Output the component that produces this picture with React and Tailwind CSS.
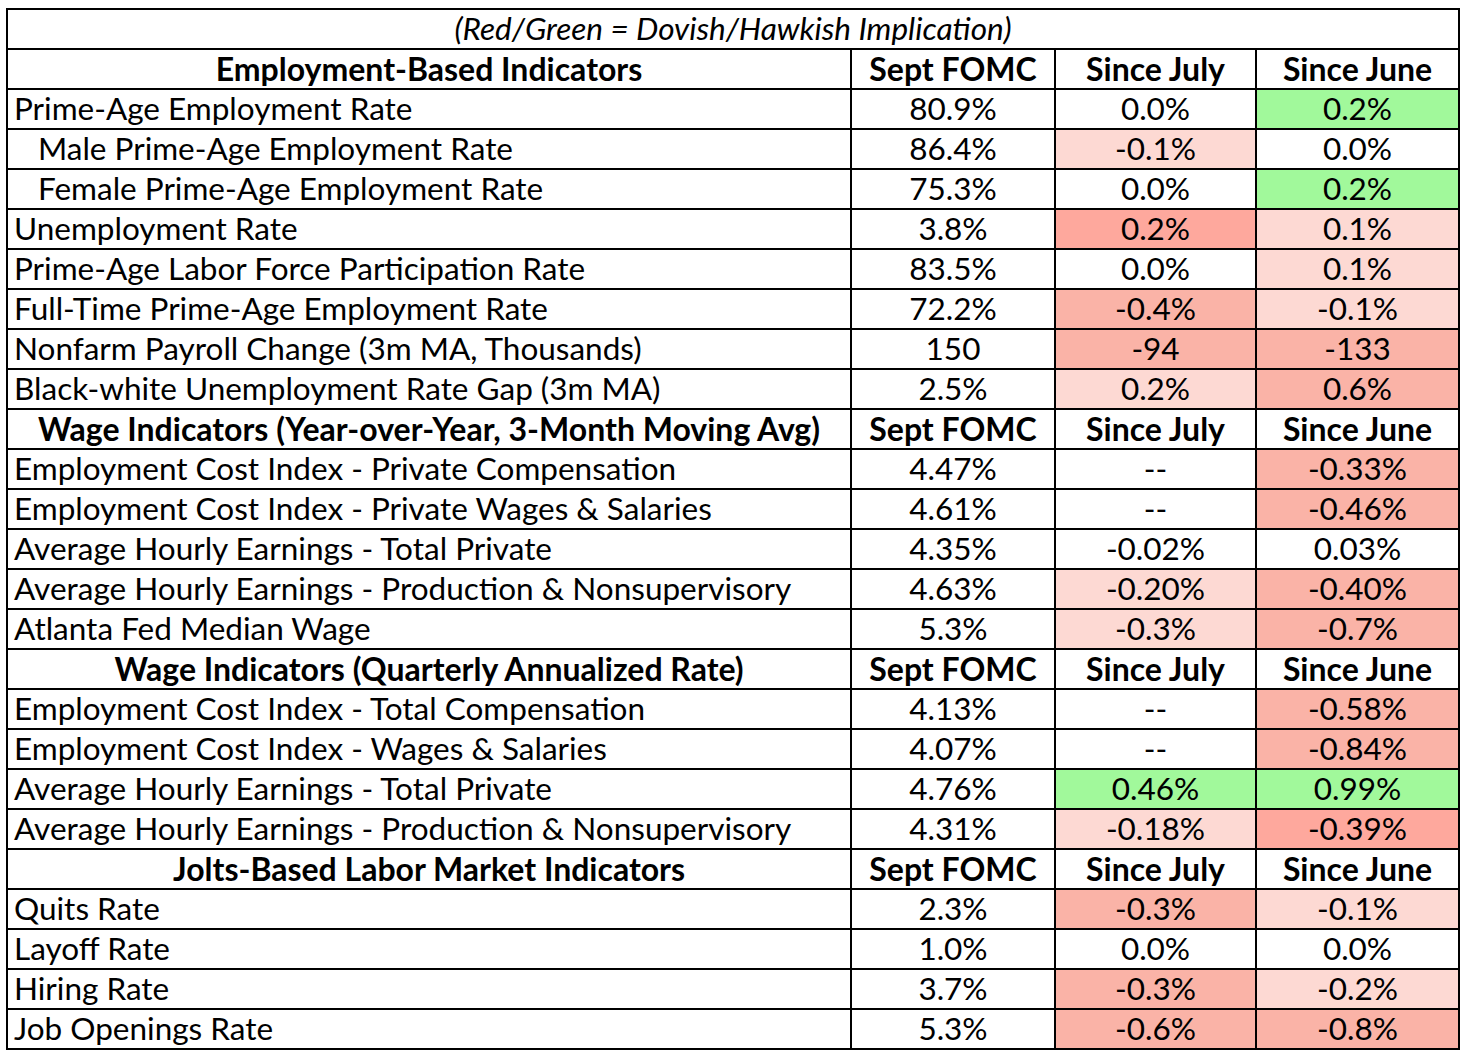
// Labor market indicators table

const G = "bg-[#a1f99b]"
const L = "bg-[#fdd9d3]"
const M = "bg-[#fab3a7]"
const D = "bg-[#fea89d]"

const sections = [
    {
        title: "Employment-Based Indicators",
        rows: [
            ["Prime-Age Employment Rate", "80.9%", ["0.0%"], ["0.2%", G]],
            ["Male Prime-Age Employment Rate", "86.4%", ["-0.1%", L], ["0.0%"], true],
            ["Female Prime-Age Employment Rate", "75.3%", ["0.0%"], ["0.2%", G], true],
            ["Unemployment Rate", "3.8%", ["0.2%", D], ["0.1%", L]],
            ["Prime-Age Labor Force Participation Rate", "83.5%", ["0.0%"], ["0.1%", L]],
            ["Full-Time Prime-Age Employment Rate", "72.2%", ["-0.4%", M], ["-0.1%", L]],
            ["Nonfarm Payroll Change (3m MA, Thousands)", "150", ["-94", M], ["-133", M]],
            ["Black-white Unemployment Rate Gap (3m MA)", "2.5%", ["0.2%", L], ["0.6%", M]],
        ],
    },
    {
        title: "Wage Indicators (Year-over-Year, 3-Month Moving Avg)",
        rows: [
            ["Employment Cost Index - Private Compensation", "4.47%", ["--"], ["-0.33%", M]],
            ["Employment Cost Index - Private Wages & Salaries", "4.61%", ["--"], ["-0.46%", M]],
            ["Average Hourly Earnings - Total Private", "4.35%", ["-0.02%"], ["0.03%"]],
            ["Average Hourly Earnings - Production & Nonsupervisory", "4.63%", ["-0.20%", L], ["-0.40%", M]],
            ["Atlanta Fed Median Wage", "5.3%", ["-0.3%", L], ["-0.7%", M]],
        ],
    },
    {
        title: "Wage Indicators (Quarterly Annualized Rate)",
        rows: [
            ["Employment Cost Index - Total Compensation", "4.13%", ["--"], ["-0.58%", M]],
            ["Employment Cost Index - Wages & Salaries", "4.07%", ["--"], ["-0.84%", M]],
            ["Average Hourly Earnings - Total Private", "4.76%", ["0.46%", G], ["0.99%", G]],
            ["Average Hourly Earnings - Production & Nonsupervisory", "4.31%", ["-0.18%", L], ["-0.39%", D]],
        ],
    },
    {
        title: "Jolts-Based Labor Market Indicators",
        rows: [
            ["Quits Rate", "2.3%", ["-0.3%", M], ["-0.1%", L]],
            ["Layoff Rate", "1.0%", ["0.0%"], ["0.0%"]],
            ["Hiring Rate", "3.7%", ["-0.3%", M], ["-0.2%", L]],
            ["Job Openings Rate", "5.3%", ["-0.6%", M], ["-0.8%", M]],
        ],
    },
]

const cell = "border-2 border-black h-[40px] p-0 leading-none overflow-hidden"

export default function App() {
    return (
        <div className="bg-white w-[1468px] h-[1064px] pt-[8px] pl-[6px] text-black font-['Lato',sans-serif] text-[31.5px]">
            <table className="border-collapse table-fixed w-[1452px]">
                <colgroup>
                    <col className="w-[844px]" />
                    <col className="w-[204px]" />
                    <col className="w-[201px]" />
                    <col className="w-[203px]" />
                </colgroup>
                <tbody>
                    <tr>
                        <td colSpan={4} className={`${cell} text-center italic`}>
                            (Red/Green = Dovish/Hawkish Implication)
                        </td>
                    </tr>
                    {sections.map((s) => (
                        <Section key={s.title} s={s} />
                    ))}
                </tbody>
            </table>
        </div>
    )
}

function Section({ s }) {
    return (
        <>
            <tr className="font-bold text-[32px]">
                <td className={`${cell} text-center whitespace-nowrap`}>{s.title}</td>
                <td className={`${cell} text-center`}>Sept FOMC</td>
                <td className={`${cell} text-center`}>Since July</td>
                <td className={`${cell} text-center`}>Since June</td>
            </tr>
            {s.rows.map(([name, val, a, b, indent]) => (
                <tr key={name + val}>
                    <td className={`${cell} whitespace-nowrap ${indent ? "pl-[30px]" : "pl-[6px]"}`}>{name}</td>
                    <td className={`${cell} text-center`}>{val}</td>
                    <td className={`${cell} text-center ${a[1] || ""}`}>{a[0]}</td>
                    <td className={`${cell} text-center ${b[1] || ""}`}>{b[0]}</td>
                </tr>
            ))}
        </>
    )
}
